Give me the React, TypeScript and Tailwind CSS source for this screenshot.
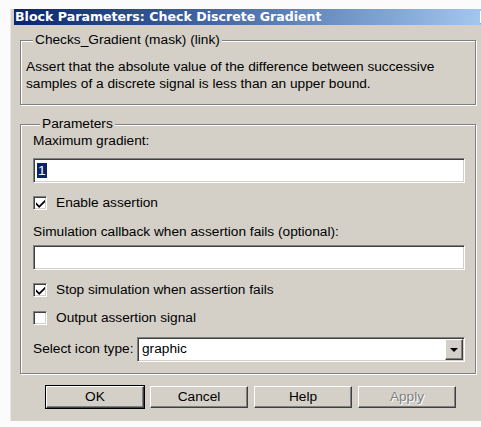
import React from "react";

// Win2000-style bevels
const sunken =
  "border border-t-[#808080] border-l-[#808080] border-b-white border-r-white shadow-[inset_1px_1px_0_#404040,inset_-1px_-1px_0_#d4d0c8]";
const raised =
  "border border-t-white border-l-white border-b-[#404040] border-r-[#404040] shadow-[inset_-1px_-1px_0_#808080]";

const GroupBox = ({
  title,
  className,
  children,
}: {
  title: string;
  className?: string;
  children: React.ReactNode;
}) => (
  <fieldset
    className={`border border-[#808080] shadow-[inset_1px_1px_0_#fff,1px_1px_0_#fff] ${className ?? ""}`}
  >
    <legend className="ml-[7px] px-[2px] bg-[#d4d0c8] leading-[16px] relative">{title}</legend>
    {children}
  </fieldset>
);

const CheckBox = ({ checked, label }: { checked: boolean; label: string }) => (
  <div className="flex items-center gap-[9px] h-[16px]">
    <div className={`w-[14px] h-[14px] bg-white flex items-center justify-center ${sunken}`}>
      {checked && (
        <svg width="9" height="9" viewBox="0 0 7 7">
          <path d="M0 2.5 L2.5 5 L7 0.5 L7 2.5 L2.5 7 L0 4.5 Z" fill="#000" />
        </svg>
      )}
    </div>
    <span>{label}</span>
  </div>
);

const Button = ({
  label,
  isDefault,
  disabled,
}: {
  label: string;
  isDefault?: boolean;
  disabled?: boolean;
}) => (
  <div
    className={`w-[98px] h-[22px] flex items-center justify-center ${
      isDefault ? "outline outline-1 outline-black" : ""
    } ${raised}`}
  >
    <span className={disabled ? "text-[#808080] [text-shadow:1px_1px_0_#fff]" : ""}>{label}</span>
  </div>
);

export default function App() {
  return (
    <div
      className="w-[481px] h-[427px] overflow-hidden bg-[#fbfbfb] pl-[10px] pt-[9px] text-[13.7px] text-black"
      style={{ fontFamily: '"Liberation Sans", Arial, sans-serif' }}
    >
      <div className="w-[480px] h-[412px] bg-[#d4d0c8] border-l border-l-[#ece9e2] pl-[2px] flex flex-col">
        {/* title bar */}
        <div className="h-[16px] ml-px flex items-center bg-gradient-to-r from-[#0a246a] to-[#a6caf0]">
          <span
            className="pl-px text-white font-bold text-[12.6px] leading-none"
            style={{ fontFamily: '"DejaVu Sans", Verdana, sans-serif' }}
          >
            Block Parameters: Check Discrete Gradient
          </span>
          <div className={`ml-auto w-[14px] h-[13px] bg-[#d4d0c8] flex items-center justify-center mr-[-4px] ${raised}`}>
            <svg width="8" height="7" viewBox="0 0 8 7">
              <path d="M0.5 0.5 L7.5 6.5 M7.5 0.5 L0.5 6.5" stroke="#000" strokeWidth="1.4" />
            </svg>
          </div>
        </div>

        <div className="pl-[7px] w-[463px] flex flex-col">
          <GroupBox title="Checks_Gradient (mask) (link)" className="mt-[7px] pl-[5px] pt-[10px] pb-[12px]">
            <p className="leading-[17px]">
              Assert that the absolute value of the difference between successive
              <br />
              samples of a discrete signal is less than an upper bound.
            </p>
          </GroupBox>

          <GroupBox title="Parameters" className="mt-[11px] pl-[12px] pr-[10px] pt-[1px] pb-[11px]">
            <div className="leading-[16px]">Maximum gradient:</div>
            <div className={`mt-[9px] h-[25px] bg-white flex items-center pl-[3px] ${sunken}`}>
              <span className="bg-[#0a246a] text-white leading-[15px] px-px">1</span>
            </div>
            <div className="mt-[12px]">
              <CheckBox checked label="Enable assertion" />
            </div>
            <div className="mt-[13px] leading-[16px]">
              Simulation callback when assertion fails (optional):
            </div>
            <div className={`mt-[5px] h-[25px] bg-white ${sunken}`} />
            <div className="mt-[12px]">
              <CheckBox checked label="Stop simulation when assertion fails" />
            </div>
            <div className="mt-[12px]">
              <CheckBox checked={false} label="Output assertion signal" />
            </div>
            <div className="mt-[11px] flex items-center">
              <span className="w-[104px]">Select icon type:</span>
              <div className={`flex-1 h-[25px] bg-white flex items-center pl-[4px] pr-[1px] ${sunken}`}>
                <span className="flex-1">graphic</span>
                <div className={`w-[18px] h-[21px] bg-[#d4d0c8] flex items-center justify-center ${raised}`}>
                  <svg width="8" height="4" viewBox="0 0 8 4">
                    <path d="M0 0 H8 L4 4 Z" fill="#000" />
                  </svg>
                </div>
              </div>
            </div>
          </GroupBox>

          {/* buttons */}
          <div className="mt-[12px] pl-[26px] flex gap-[6px]">
            <Button label="OK" isDefault />
            <Button label="Cancel" />
            <Button label="Help" />
            <Button label="Apply" disabled />
          </div>
        </div>
      </div>
    </div>
  );
}
